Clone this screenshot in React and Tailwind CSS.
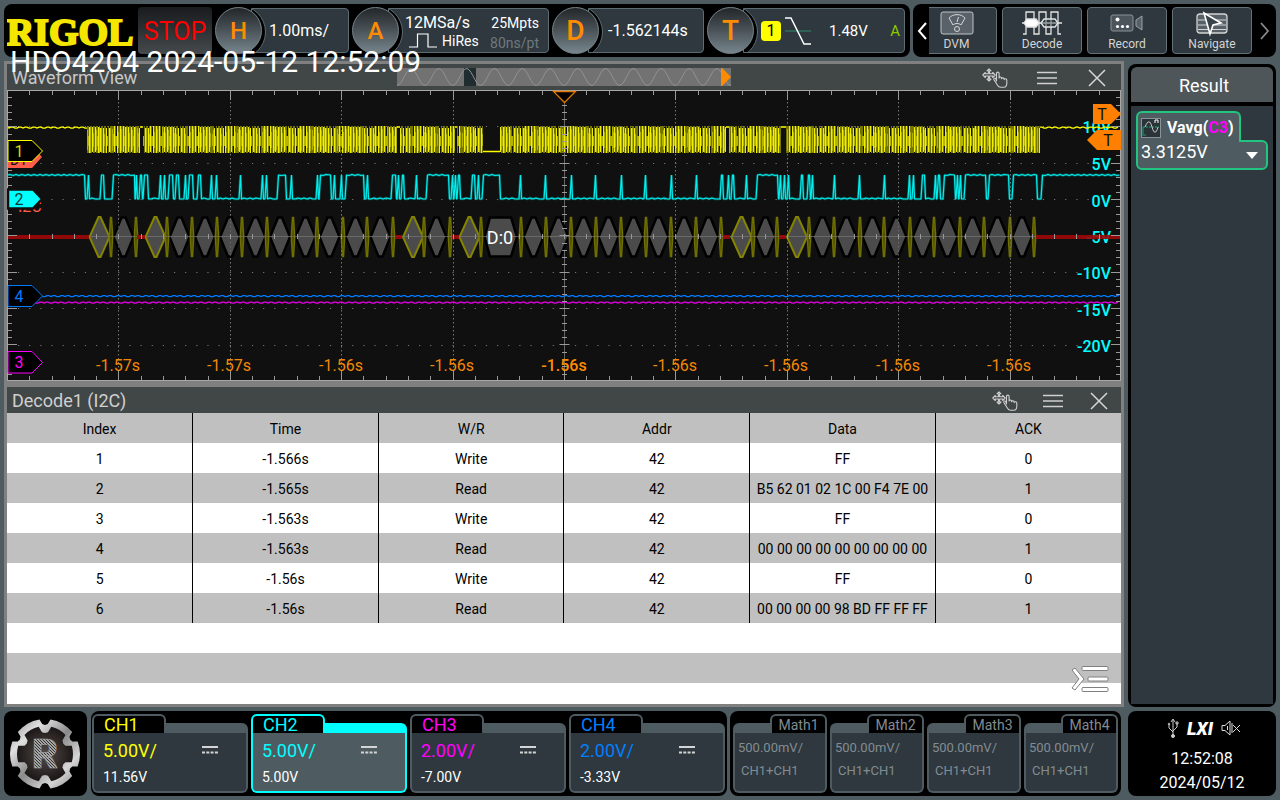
import React from "react";

const TOP = 90;
const BOTTOM = 381;
const MAJOR_X = [118.5, 230.5, 341.5, 453.5, 675.5, 787.5, 898.5, 1010.5];
const MAJOR_Y = [126.5, 163.5, 199.5, 272.5, 308.5, 345.5];

function gridTicks() {
  let d = "";
  for (let i = 0; i <= 50; i++) {
    const x = Math.round(7 + i * 22.28) + 0.5;
    const len = i % 5 === 0 ? 10 : 5;
    d += `M${x} ${TOP}v${len}M${x} ${BOTTOM}v${-len}M${x} 234v5`;
  }
  for (let j = 0; j <= 40; j++) {
    const y = Math.round(TOP + j * 7.27) + 0.5;
    const len = j % 5 === 0 ? 10 : 5;
    d += `M7 ${y}h${len}M1121 ${y}h${-len}M${564.5 - len / 2} ${y}h${len}`;
  }
  return d;
}

function clockBurst() {
  const out = { bright: "", dim: "", mid: "" };
  const gaps = [[140, 143], [397, 400], [455, 457], [483, 500], [726, 729], [781, 786]];
  for (let x = 87; x <= 1039; x++) {
    if (gaps.some(([a, b]) => x >= a && x < b)) continue;
    const p = (x * 0.36) % 1;
    const c = x + 0.5;
    const beat = (x * 5) % 9;
    if (p < 0.3) out.bright += `M${c} ${126 + (beat % 3)}V${153 - (beat % 2)}`;
    else if (beat === 4 || beat === 8) out.mid += `M${c} 136V146`;
    else if (p < 0.68) out.mid += `M${c} ${127 + beat}V${153 - beat}`;
    if (p >= 0.3 && beat !== 4) out.dim += `M${c} 126V153`;
  }
  return out;
}

const HIGHS = [
  [7, 84], [88, 88], [101, 103], [113, 134], [136, 136], [140, 141], [144, 147], [160, 160],
  [164, 164], [169, 172], [176, 178], [185, 185], [189, 192], [198, 200], [211, 211], [216, 216],
  [240, 240], [262, 262], [266, 266], [278, 285], [291, 291], [317, 317], [320, 330], [334, 334],
  [341, 341], [346, 363], [367, 367], [392, 395], [398, 398], [402, 403], [416, 416], [427, 448],
  [452, 452], [455, 455], [458, 459], [472, 474], [478, 478], [483, 499], [520, 520], [545, 545],
  [571, 571], [595, 595], [621, 621], [645, 645], [671, 671], [696, 696], [721, 722], [728, 728],
  [732, 733], [746, 746], [757, 777], [780, 780], [784, 784], [788, 788], [801, 802], [808, 809],
  [812, 812], [834, 834], [859, 859], [884, 884], [909, 909], [913, 913], [922, 924], [935, 935],
  [938, 939], [944, 954], [957, 957], [960, 960], [965, 985], [989, 1008], [1013, 1036], [1042, 1119],
];

function dataLine() {
  let d = "M7 175.5";
  HIGHS.forEach(([a, b], i) => {
    const prev = i ? HIGHS[i - 1][1] : 0;
    if (i) {
      const gap = Math.min(1.5, (a - prev) / 2);
      d += `L${prev + gap} 199`;
      for (let x = prev + 4; x < a - 3; x += 3) d += `L${x} ${198 + (x % 2)}`;
      d += `L${a - gap + 0.5} 199`;
    }
    d += `L${a + 0.5} 175`;
    for (let x = a + 3; x < b - 1; x += 3) d += `L${x} ${174.5 + (x % 2)}`;
    d += `L${b + 0.5} 175`;
  });
  return d;
}

function noisyLine(y, from, to) {
  let d = `M${from} ${y}`;
  for (let x = from; x <= to; x += 2) d += `L${x} ${y + ((x * 13) % 7 > 3 ? 0.6 : -0.4)}`;
  return d;
}

const ACKS = [
  111, 136, 167, 192, 217, 242, 267, 293, 317, 343, 367, 393, 424, 450, 481, 521, 546, 571, 596, 621,
  646, 671, 696, 721, 753, 777, 809, 834, 860, 884, 910, 934, 960, 984, 1010, 1034,
];
const BYTES = [
  123.5, 179.5, 205, 230, 255.5, 280, 305.5, 329.5, 355.5, 380.5, 436.5, 533.5, 558.5, 583.5, 608.5,
  633.5, 658.5, 684, 708.5, 765.5, 822.5, 846.5, 872.5, 896.5, 922.5, 947.5, 972.5, 997.5, 1022,
];
const ADDRESSES = [99.5, 155.5, 413, 469.5, 741.5, 797];
const IDLE = [[7, 89], [137, 145], [395, 402], [452, 459], [723, 730], [779, 786], [1036, 1121]];

function Waveform() {
  const burst = clockBurst();
  const data = dataLine();
  return (
    <svg viewBox="7 90 1114 291" className="block h-auto w-full bg-[#101010]" fontFamily="Roboto, sans-serif" role="img" aria-label="Waveform">
      <g stroke="#777" strokeWidth="1" fill="none">
        {MAJOR_X.map((x) => <path key={x} d={`M${x} 90V381`} strokeDasharray="1.5 2.5" />)}
        {MAJOR_Y.map((y) => <path key={y} d={`M18 ${y}H1110`} strokeDasharray="1.2 9.94" />)}
        <path d="M564.5 90V381" stroke="#666" />
        <path d="M89 236.500H1036" stroke="#666" />
      </g>

      <g fill="#00ffff" fontSize="16" fontWeight="500" textAnchor="end">
        <text x="1111" y="133">10V</text>
        <text x="1111" y="170">5V</text>
        <text x="1111" y="207">0V</text>
        <text x="1111" y="279">-10V</text>
        <text x="1111" y="316">-15V</text>
        <text x="1111" y="352">-20V</text>
      </g>

      <path d={noisyLine(127.5, 7, 88)} stroke="#ffff00" strokeWidth="1.3" fill="none" />
      <path d="M140 127h3M397 127h3M455 127h2M483 151.500h17M726 127h3M781 127h5" stroke="#ffff00" strokeWidth="1.5" />
      <g shapeRendering="crispEdges" fill="none">
        <path d={burst.dim} stroke="#747400" />
        <path d={burst.mid} stroke="#b4b400" />
        <path d={burst.bright} stroke="#f0f000" />
      </g>
      <path d={noisyLine(127.5, 1040, 1119)} stroke="#ffff00" strokeWidth="1.3" fill="none" />
      <path d={data} stroke="#007c7c" strokeWidth="2.6" fill="none" strokeLinejoin="bevel" opacity="0.6" />
      <path d={data} stroke="#00f0f0" strokeWidth="1.2" fill="none" strokeLinejoin="bevel" />
      <path d={noisyLine(296, 43, 1119)} stroke="#007aff" strokeWidth="1.3" fill="none" />
      <path d={noisyLine(302.5, 34, 1119)} stroke="#e800e8" strokeWidth="1.3" fill="none" />

      <text x="1111" y="243" fill="#00ffff" fontSize="16" fontWeight="500" textAnchor="end">-5V</text>
      {BYTES.map((x) => (
        <path key={x} d={`M${x - 2} 217.500H${x + 2}L${x + 10} 237L${x + 2} 256.500H${x - 2}L${x - 10} 237Z`} fill="#4b4b4b" stroke="#000" strokeWidth="2.500" />
      ))}
      <path d="M490 217.500H511L517 237L511 256.500H490L484.500 237Z" fill="#4b4b4b" stroke="#000" strokeWidth="2.500" />
      {ADDRESSES.map((x) => (
        <path key={x} d={`M${x - 1} 217H${x + 1}L${x + 10} 237L${x + 1} 257H${x - 1}L${x - 10} 237Z`} fill="#4b4b4b" stroke="#858500" strokeWidth="2" />
      ))}
      {ACKS.map((x) => (
        <path key={x} d={`M${x - 0.5} 217.500L${x - 1.7} 237L${x - 0.5} 256.500H${x + 0.5}L${x + 1.7} 237L${x + 0.5} 217.500Z`} fill="#4a4a00" stroke="#707000" strokeWidth="1.500" />
      ))}
      <path d="M89 236.500H1036" stroke="#777" opacity="0.7" />
      <g stroke="#777" fill="none" opacity="0.7">
        {MAJOR_X.map((x) => <path key={x} d={`M${x} 214V260`} strokeDasharray="1.5 2.5" />)}
      </g>
      {IDLE.map(([a, b]) => <path key={a} d={`M${a} 237H${b}`} stroke="#a00808" strokeWidth="4" opacity="0.9" />)}
      <path d={gridTicks()} stroke="#999" fill="none" />
      <path d="M7 90.500H1121M7 380.500H1121M7.500 90V381M1120.500 90V381" stroke="#a8a8a8" fill="none" />
      <path d="M488 228h24v18h-24z" fill="#4b4b4b" />
      <text x="500" y="244" textAnchor="middle" fontSize="18" fill="#fff">D:0</text>

      <g fill="#f28806" fontSize="16" textAnchor="middle">
        <text x="118" y="371">-1.57s</text>
        <text x="229" y="371">-1.57s</text>
        <text x="341" y="371">-1.56s</text>
        <text x="452" y="371">-1.56s</text>
        <text x="564" y="371" fontWeight="500" fill="#ff8c00">-1.56s</text>
        <text x="675" y="371">-1.56s</text>
        <text x="786" y="371">-1.56s</text>
        <text x="898" y="371">-1.56s</text>
        <text x="1009" y="371">-1.56s</text>
      </g>

      <path d="M553.500 91.500H575.500L564.500 102.500Z" fill="#000" stroke="#e07800" strokeWidth="1.300" />
      <path d="M1093 104H1111L1121 114L1111 124H1093Z" fill="#ff8000" />
      <path d="M1121 130H1097L1087 140L1097 150H1121Z" fill="#ff8000" />
      <g fill="#101010" fontSize="16" textAnchor="middle">
        <text x="1102" y="120">T</text>
        <text x="1108" y="146">T</text>
      </g>

      <path d="M8 146H32L42 157L32 168H8Z" fill="#ff5c4a" />
      <text x="10" y="165" fontSize="14" fill="#101010">D1</text>
      <path d="M8 140.500H32L42.500 151L32 161.500H8Z" fill="#000" stroke="#ffff00" />
      <text x="18" y="212" fontSize="16" fill="#ff5c4a">I2C</text>
      <path d="M8 189.500H33L42 199L33 208.500H8Z" fill="#00ffff" stroke="#101010" strokeWidth="2.500" />
      <path d="M8 285.500H32L42.500 296L32 306.500H8Z" fill="#000" stroke="#007aff" />
      <path d="M8 351.500H32L42.500 362.500L32 373H8Z" fill="#000" stroke="#ff00ff" />
      <g fontSize="16" textAnchor="middle">
        <text x="19" y="157" fill="#d8d800">1</text>
        <text x="19" y="205" fill="#083838">2</text>
        <text x="19" y="302" fill="#007aff">4</text>
        <text x="19" y="368" fill="#ff00ff">3</text>
      </g>
    </svg>
  );
}

function Overview() {
  let d = "M0 18";
  for (let x = 0; x <= 334; x += 2) d += `L${x} ${9 - 8.5 * Math.cos(((x - 14) / 27.8) * 2 * Math.PI)}`;
  return (
    <svg width="334" height="18" viewBox="0 0 334 18" aria-hidden="true">
      <path d="M0 0h334v18H0z" fill="#727272" />
      <path d="M67 0h12v18H67z" fill="#1f2c30" />
      <path d={d} fill="none" stroke="#929292" />
      <path d="M324 0h1l9 9-9 9h-1z" fill="#ff8c00" />
    </svg>
  );
}

function HandIcon() {
  return (
    <svg width="28" height="20" viewBox="0 0 28 20" fill="none" stroke="#d0d0d0" strokeWidth="1.1" strokeLinejoin="round">
      <path d="M7 .8l-2 2h1.400v3H3.300V4.500L.800 7l2.500 2.500V8h3.100v3H5l2 2 2-2H7.600V8h3.100v1.500L13.200 7l-2.500-2.500v1.300H7.600v-3H9z" />
      <path d="M14.500 13V5.500c0-1.800 2.600-1.800 2.600 0V10c0-1.300 2.500-1.300 2.500 0v.8c0-1.300 2.600-1.300 2.600.2v.6c0-1.300 2.600-1.200 2.600.5v3.200c0 2.500-1.300 3.900-2.900 3.900h-3.200c-1.500 0-2.500-.8-3.200-2l-3.500-5.500c-.8-1.400.8-2.200 1.700-1.200z" />
    </svg>
  );
}

function PanelButtons({ name, gaps }) {
  return (
    <div className={`flex items-center ${gaps}`}>
      <button aria-label={`Move ${name}`}><HandIcon /></button>
      <button aria-label={`${name} menu`}>
        <svg width="20" height="14" viewBox="0 0 20 14" stroke="#d0d0d0" strokeWidth="1.600"><path d="M0 1.500h20M0 7h20M0 12.500h20" /></svg>
      </button>
      <button aria-label={`Close ${name}`} className="ml-1">
        <svg width="18" height="18" viewBox="0 0 18 18" stroke="#d8d8d8" strokeWidth="1.500"><path d="M1 1l16 16M17 1L1 17" /></svg>
      </button>
    </div>
  );
}

function Dial({ letter, size, className, children }) {
  return (
    <div className={`relative flex h-[47px] items-center ${className}`}>
      <div className="relative ml-9 flex h-[45px] flex-1 items-center overflow-hidden rounded-r border border-[#5c6c73] bg-[#2e383e]">
        <span className="absolute -left-10 -top-1 size-[54px] rounded-full border border-[#5c6c73] bg-black" />
        {children}
      </div>
      <button className={`absolute left-0 top-0 flex size-[47px] items-center justify-center rounded-full border border-[#76858c] bg-linear-to-b from-[#23272a] to-[#77858d] font-medium text-[#ff8c00] ${size}`}>
        {letter}
      </button>
    </div>
  );
}

function ToolButton({ label, className, children }) {
  return (
    <button className={`flex h-[47px] flex-col items-center justify-between border border-[#637279] bg-[#2e383e] pb-[2px] pt-[3px] text-xs leading-[14px] text-[#d4d4d4] ${className}`}>
      <svg width="36" height="24" viewBox="0 0 36 24" fill="none" className="overflow-visible">{children}</svg>
      {label}
    </button>
  );
}

function TopBar() {
  return (
    <header className="flex gap-[3px]">
      <div className="flex h-[53px] flex-1 items-center gap-[3px] rounded-lg bg-black pl-[3px] pr-[5px]">
        <svg width="128" height="47" viewBox="0 0 128 47" aria-label="RIGOL">
          <text x="63" y="38" textAnchor="middle" fontFamily="Liberation Serif, serif" fontWeight="700" fontSize="38" fill="#f5e600" stroke="#f5e600" strokeWidth="2">RIGOL</text>
        </svg>
        <button className="h-[47px] w-[74px] rounded bg-linear-to-b from-[#191b1d] to-[#454a4d] pt-[2px] text-[25px] text-[#ff0000]">STOP</button>
        <Dial letter="H" size="text-2xl" className="w-[134px]">
          <span className="ml-[17px]">1.00ms/</span>
        </Dial>
        <Dial letter="A" size="text-2xl" className="w-[197px]">
          <span className="relative ml-4 flex flex-1 flex-col pt-[2px] leading-[18px]">
            <span>12MSa/s</span>
            <span className="flex items-center gap-[5px] pl-1 text-sm leading-[18px]">
              <svg width="28" height="15" viewBox="0 0 28 15" fill="none" stroke="#fff" strokeWidth="1.200"><path d="M0 14h8.500V1H19v13h9" /></svg>
              HiRes
            </span>
          </span>
          <span className="flex flex-col pr-[9px] pt-[4px] text-right text-sm leading-5">
            <span>25Mpts</span>
            <span className="text-[#70797f]">80ns/pt</span>
          </span>
        </Dial>
        <Dial letter="D" size="text-[28px]" className="w-[152px]">
          <span className="ml-[19px]">-1.562144s</span>
        </Dial>
        <Dial letter="T" size="text-[28px]" className="w-[198px]">
          <span className="relative ml-[17px] flex h-5 w-5 items-center justify-center rounded bg-[#ffff00] text-black">1</span>
          <svg className="ml-1" width="26" height="28" viewBox="0 0 26 28" fill="none">
            <path d="M0 14h26" stroke="#2c6f5c" strokeWidth="1.500" />
            <path d="M0 1h6l13 26h7" stroke="#fff" strokeWidth="1.500" />
          </svg>
          <span className="ml-[18px] flex-1 pt-[2px] text-[15px]">1.48V</span>
          <span className="mr-1 pt-[2px] text-[15px] text-[#8cc800]">A</span>
        </Dial>
      </div>

      <nav className="flex h-[53px] w-[363px] items-center gap-[5px] rounded-lg bg-black pl-1">
        <button aria-label="Previous tools" className="-mr-[5px] w-[12px]">
          <svg width="10" height="18" viewBox="0 0 10 18" fill="none" stroke="#fff" strokeWidth="2"><path d="M9 1L2 9l7 8" /></svg>
        </button>
        <ToolButton label="DVM" className="w-[68px] rounded-r border-l-0 pr-3">
          <rect x="2" y="1" width="32" height="22" rx="2" fill="#596268" stroke="#bfc5c8" />
          <path d="M10 7c4-4.500 12-4.500 16 0l-4 7c-2-2-6-2-8 0zM18 11l1.500-5" stroke="#d8d8d8" />
          <circle cx="18" cy="18" r="2.500" stroke="#d8d8d8" />
        </ToolButton>
        <ToolButton label="Decode" className="w-20 rounded">
          <g transform="translate(-2 0)" stroke="#e4e4e4" strokeWidth="1.300">
            <path d="M1 23h3V1h8v22h5V1h7v22h5V1h7v22h3" />
            <path d="M0 12h40" />
            <path d="M2 12l3-4h9l3 4-3 4H5z" fill="#fff" />
            <path d="M19 12l3-4h11l3 4-3 4H22z" fill="#2e383e" fillOpacity="0.400" />
          </g>
        </ToolButton>
        <ToolButton label="Record" className="w-20 rounded">
          <rect x="2" y="4" width="22" height="16" rx="2" fill="#4b555b" stroke="#899297" />
          <circle cx="8.500" cy="8.500" r="2" fill="#fff" />
          <circle cx="8.500" cy="15.500" r="1.600" fill="#fff" />
          <circle cx="13.500" cy="15.500" r="1.600" fill="#fff" />
          <circle cx="18.500" cy="15.500" r="1.600" fill="#fff" />
          <path d="M27 9l6-4v14l-6-4z" fill="#566066" stroke="#9aa2a6" />
        </ToolButton>
        <ToolButton label="Navigate" className="w-20 rounded">
          <rect x="3" y="3" width="30" height="19" rx="3" fill="#566066" stroke="#d4d4d4" strokeWidth="1.300" />
          <path d="M4 9h28M4 14h28M4 18.500h28" stroke="#d4d4d4" strokeWidth="1.200" />
          <path d="M10 2l17 10-8 2-3 9z" fill="#39444a" stroke="#fff" strokeWidth="1.600" />
        </ToolButton>
        <button aria-label="More tools" className="ml-[3px]">
          <svg width="10" height="18" viewBox="0 0 10 18" fill="none" stroke="#8a8a8a" strokeWidth="1.800"><path d="M1 1l7 8-7 8" /></svg>
        </button>
      </nav>
    </header>
  );
}

const ROWS = [
  ["1", "-1.566s", "Write", "42", "FF", "0"],
  ["2", "-1.565s", "Read", "42", "B5 62 01 02 1C 00 F4 7E 00", "1"],
  ["3", "-1.563s", "Write", "42", "FF", "0"],
  ["4", "-1.563s", "Read", "42", "00 00 00 00 00 00 00 00 00", "1"],
  ["5", "-1.56s", "Write", "42", "FF", "0"],
  ["6", "-1.56s", "Read", "42", "00 00 00 00 98 BD FF FF FF", "1"],
];

function DecodeTable() {
  return (
    <div className="relative flex-1 bg-white text-sm text-black">
      <table className="w-full table-fixed border-collapse text-center">
        <thead>
          <tr className="h-[30px] bg-[#c0c0c0]">
            {["Index", "Time", "W/R", "Addr", "Data", "ACK"].map((h) => (
              <th key={h} className="border-r border-black p-0 pt-[2px] font-normal last:border-r-0">{h}</th>
            ))}
          </tr>
        </thead>
        <tbody>
          {ROWS.map((r) => (
            <tr key={r[0]} className="h-[30px] bg-white even:bg-[#c0c0c0]">
              {r.map((c, i) => (
                <td key={i} className="whitespace-nowrap border-r border-black p-0 pt-[2px] last:border-r-0">{c}</td>
              ))}
            </tr>
          ))}
        </tbody>
      </table>
      <div className="h-[30px]" />
      <div className="h-[30px] bg-[#c0c0c0]" />
      <div className="h-[21px]" />
      <button aria-label="Table options" className="absolute bottom-[10px] right-3">
        <svg width="38" height="30" viewBox="0 0 38 30" fill="#fff" stroke="#808080" strokeWidth="1">
          <path d="M1 6l3-2 9 11-9 11-3-2 7-9z" />
          <rect x="11" y="2.500" width="26" height="4" rx="1" />
          <rect x="17" y="13" width="20" height="4" rx="1" />
          <rect x="11" y="23.500" width="26" height="4" rx="1" />
        </svg>
      </button>
    </div>
  );
}

function ResultPanel() {
  return (
    <aside className="mt-[3px] flex w-[148px] flex-col gap-1 rounded-lg bg-black p-[3px]">
      <h2 className="flex h-[35px] items-center justify-center rounded-t-md bg-[#4f565a] pl-1 pt-[2px] text-lg leading-none">Result</h2>
      <div className="flex-1 bg-[#2e383e] px-[5px] pt-[5px]">
        <button className="block w-full text-left">
          <span className="relative z-10 flex h-[31px] w-[105px] items-center gap-[6px] rounded-t-md border-2 border-b-0 border-[#22c580] bg-[#4e5b60] pl-[3px] font-bold">
            <svg width="20" height="20" viewBox="0 0 20 20" fill="none">
              <rect x=".5" y=".5" width="19" height="19" fill="#2a3338" stroke="#899297" />
              <path d="M2 9h16" stroke="#22a070" strokeDasharray="2 1" />
              <path d="M2 16V9M1 17h4" stroke="#22a070" />
              <path d="M4 9c3-7 5-7 7 0s4 7 6 0" stroke="#c8c8c8" />
              <path d="M14 5V2h3v3" stroke="#fff" />
            </svg>
            <span>Vavg(<span className="text-[#ff00ff]">C3</span>)</span>
          </span>
          <span className="-mt-[2px] flex h-[30px] items-center justify-between rounded-b-md rounded-tr-md border-2 border-[#22c580] bg-[#4e5b60] pl-[3px] pr-2 text-lg leading-none">
            <span className="relative z-10 pb-[6px]">3.3125V</span>
            <svg width="12" height="8" viewBox="0 0 12 8"><path d="M0 1h12L6 8z" fill="#fff" /></svg>
          </span>
        </button>
      </div>
    </aside>
  );
}

const CHANNELS = [
  { name: "CH1", scale: "5.00V/", offset: "11.56V", color: "text-[#ffff00]" },
  { name: "CH2", scale: "5.00V/", offset: "5.00V", color: "text-[#00ffff]", active: true },
  { name: "CH3", scale: "2.00V/", offset: "-7.00V", color: "text-[#ff00ff]" },
  { name: "CH4", scale: "2.00V/", offset: "-3.33V", color: "text-[#007fff]" },
];

function Channel({ name, scale, offset, color, active }) {
  const edge = active ? "border-[#00ffff]" : "border-[#4e5b60]";
  return (
    <button className="flex h-[78px] flex-1 flex-col text-left">
      <span className="flex w-full items-end">
        <span className={`flex h-[19px] w-[74px] items-center rounded-t-md border-2 border-b-0 bg-black pl-[10px] text-lg leading-none ${edge} ${color}`}>{name}</span>
        <span className={`h-[10px] flex-1 rounded-tr-md ${active ? "bg-[#00ffff]" : "bg-[#4e5b60]"}`} />
      </span>
      <span className={`flex w-full flex-1 flex-col rounded-b-md border-2 border-t-0 pl-[9px] pt-[6px] ${edge} ${active ? "bg-[#4e5b60]" : "bg-[#2e383e]"}`}>
        <span className={`flex items-center justify-between pr-7 text-lg leading-6 ${color}`}>
          {scale}
          <svg className="mb-[2px]" width="16" height="8" viewBox="0 0 16 8" stroke="#d4d4d4"><path d="M0 1h16" strokeWidth="2" /><path d="M0 6.500h16" strokeWidth="2" strokeDasharray="3 1.300" /></svg>
        </span>
        <span className="text-sm leading-7">{offset}</span>
      </span>
    </button>
  );
}

function MathCard({ name }) {
  return (
    <button className="flex h-[79px] flex-1 flex-col text-left text-[#838c92]">
      <span className="flex w-full items-end">
        <span className="h-[10px] flex-1 rounded-tl-md bg-[#4e5b60]" />
        <span className="flex h-[19px] w-[57px] items-center justify-center rounded-t-md border-2 border-b-0 border-[#4e5b60] bg-black text-sm leading-none">{name}</span>
      </span>
      <span className="flex w-full flex-1 flex-col gap-[5px] rounded-b-md border-2 border-t-0 border-[#4e5b60] bg-[#2e383e] pl-[3px] pt-[6px] text-[13px] leading-[18px]">
        <span>500.00mV/</span>
        <span className="pl-[3px]">CH1+CH1</span>
      </span>
    </button>
  );
}

function gearPath(tooth, notch, half) {
  let d = "";
  for (let i = 0; i < 6; i++) {
    const rim = 30 - half;
    [[-rim, tooth], [-rim / 2, tooth], [0, tooth], [rim / 2, tooth], [rim, tooth], [30 - half * 0.6, notch + 1], [30, notch], [30 + half * 0.6, notch + 1]].forEach(([da, r], k) => {
      const a = ((i * 60 + da) * Math.PI) / 180;
      d += `${i || k ? "L" : "M"}${(36 + r * Math.cos(a)).toFixed(1)} ${(36 + r * Math.sin(a)).toFixed(1)}`;
    });
  }
  return d + "Z";
}

function GearLogo() {
  return (
    <svg width="72" height="72" viewBox="0 0 72 72">
      <defs>
        <linearGradient id="metal" x1="0" y1="0" x2="1" y2="1">
          <stop offset="0" stopColor="#909090" />
          <stop offset=".25" stopColor="#e0e0e0" />
          <stop offset=".5" stopColor="#8a8a8a" />
          <stop offset=".75" stopColor="#d6d6d6" />
          <stop offset="1" stopColor="#808080" />
        </linearGradient>
        <radialGradient id="core">
          <stop offset="0" stopColor="#554c4a" />
          <stop offset="1" stopColor="#1c1817" />
        </radialGradient>
        <pattern id="mesh" width="3" height="3" patternUnits="userSpaceOnUse">
          <path d="M0 0h3v3H0z" fill="#a4a4a4" />
          <path d="M0 0l3 3" stroke="#333" />
        </pattern>
      </defs>
      <path d={gearPath(35, 29, 9)} fill="url(#metal)" />
      <path d={gearPath(28, 21, 13)} fill="url(#core)" />
      <text x="36" y="50" textAnchor="middle" fontFamily="Roboto, sans-serif" fontWeight="900" fontSize="40" fill="url(#mesh)" stroke="#b0b0b0" strokeWidth=".5">R</text>
    </svg>
  );
}

function BottomBar() {
  return (
    <footer className="flex h-[85px]">
      <button aria-label="Main menu" className="mr-1 flex w-[83px] items-center justify-center rounded-lg bg-black pr-[2px]"><GearLogo /></button>
      <div className="mr-[3px] flex flex-1 gap-[3px] rounded-lg bg-black pl-[1px] pr-[2px] pt-[3px]">
        {CHANNELS.map((c) => <Channel key={c.name} {...c} />)}
      </div>
      <div className="mr-[7px] flex w-[391px] gap-[3px] rounded-lg bg-black px-[3px] pt-[3px]">
        {["Math1", "Math2", "Math3", "Math4"].map((m) => <MathCard key={m} name={m} />)}
      </div>
      <div className="flex w-[148px] flex-col items-center rounded-lg bg-black pt-[6px] leading-6">
        <div className="flex h-[22px] items-center gap-2 pl-1">
          <svg width="12" height="20" viewBox="0 0 12 20" fill="none" stroke="#ccc">
            <path d="M6 2v16M2 6v4l4 4M10 5v4l-4 4M4 4l2-3 2 3" />
            <circle cx="6" cy="18" r="1.500" fill="#ccc" />
            <circle cx="2" cy="6" r=".8" />
            <path d="M9 4h2v2H9z" />
          </svg>
          <span className="pt-[2px] text-lg font-black italic leading-none">LXI</span>
          <svg width="20" height="16" viewBox="0 0 20 16" fill="none" stroke="#ddd">
            <path d="M1 5.500v5h3L9 15V1L4 5.500zM11 3v10M6.500 6v4M12 5l7 7M19 5l-7 7" />
          </svg>
        </div>
        <time className="mt-2">12:52:08</time>
        <time>2024/05/12</time>
      </div>
    </footer>
  );
}

export default function App() {
  return (
    <div className="relative flex min-h-screen flex-col gap-1 bg-[#4e5b60] p-1 font-[Roboto,sans-serif] text-base text-white">
      <TopBar />
      <main className="flex flex-1 gap-1">
        <div className="flex flex-1 flex-col bg-[#808080] p-[3px]">
          <section>
            <div className="relative flex h-[26px] items-center justify-between bg-[#414647] pl-[5px] pr-[15px] pt-[2px]">
              <h2 className="text-lg leading-none text-[#c8c8c8]">Waveform View</h2>
              <div className="absolute inset-x-0 top-1 flex justify-center"><Overview /></div>
              <div className="relative"><PanelButtons name="waveform" gaps="gap-[27px]" /></div>
            </div>
            <Waveform />
          </section>
          <section className="mt-[6px] flex flex-1 flex-col">
            <div className="flex h-[26px] items-center justify-between bg-[#414647] pl-[5px] pr-[13px] pt-[2px]">
              <h2 className="text-lg leading-none text-[#d0d0d0]">Decode1 (I2C)</h2>
              <PanelButtons name="decode" gaps="gap-[23px]" />
            </div>
            <DecodeTable />
          </section>
        </div>
        <ResultPanel />
      </main>
      <BottomBar />
      <h1 className="pointer-events-none absolute left-[10px] top-[44px] text-3xl leading-9">HDO4204 2024-05-12 12:52:09</h1>
    </div>
  );
}
